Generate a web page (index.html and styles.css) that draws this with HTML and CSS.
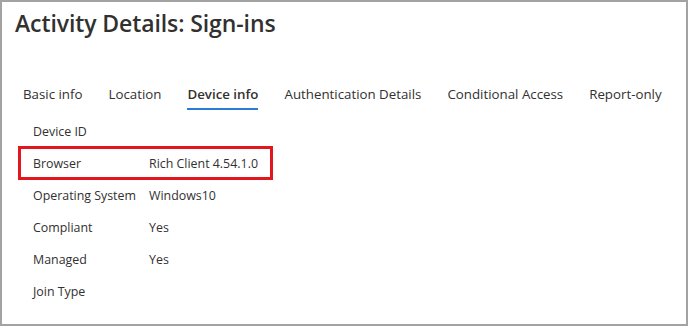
FILE: index.html
```html
<!DOCTYPE html>
<html lang="en">

<head>
    <meta charset="UTF-8">
    <meta name="viewport" content="width=device-width, initial-scale=1.0">
    <title>Activity Details: Sign-ins</title>
    <link rel="stylesheet" href="styles.css">
</head>

<body>

    <div class="panel">
        <h1 class="title">Activity Details: Sign-ins</h1>

        <!-- Abas -->
        <div class="tabs">
            <div class="tab">Basic info</div>
            <div class="tab">Location</div>
            <div class="tab active">Device info</div>
            <div class="tab">Authentication Details</div>
            <div class="tab">Conditional Access</div>
            <div class="tab">Report-only</div>
        </div>

        <!-- Detalhes do dispositivo -->
        <div class="details">
            <div class="row">
                <span class="label">Device ID</span>
                <span class="value"></span>
            </div>
            <div class="row highlight">
                <span class="label">Browser</span>
                <span class="value">Rich Client 4.54.1.0</span>
            </div>
            <div class="row">
                <span class="label">Operating System</span>
                <span class="value">Windows10</span>
            </div>
            <div class="row">
                <span class="label">Compliant</span>
                <span class="value">Yes</span>
            </div>
            <div class="row">
                <span class="label">Managed</span>
                <span class="value">Yes</span>
            </div>
            <div class="row">
                <span class="label">Join Type</span>
                <span class="value"></span>
            </div>
        </div>
    </div>

</body>

</html>
```

FILE: styles.css
```css
body {
    font-family: 'Open Sans', 'Noto Sans', sans-serif;
    margin: 0;
    padding: 0;
    background-color: #fff;
    color: #323130;
}

.panel {
    box-sizing: border-box;
    width: 688px;
    height: 326px;
    border: 2px solid #a3a3a3;
    background-color: #fff;
}

.title {
    margin: 5px 0 0 13px;
    font-size: 23px;
    font-weight: 600;
    line-height: 32px;
    letter-spacing: -0.1px;
}

.tabs {
    display: flex;
    gap: 26px;
    margin: 45px 0 0 21px;
}

.tab {
    font-size: 13.3px;
    line-height: 20px;
    padding-bottom: 4px;
    border-bottom: 2px solid transparent;
    white-space: nowrap;
}

.tab.active {
    font-weight: 600;
    border-bottom-color: #2b7bd3;
}

.details {
    margin-top: 5px;
}

.row {
    display: flex;
    align-items: center;
    width: 253px;
    height: 32px;
    margin-left: 17px;
    padding-left: 14px;
    box-sizing: border-box;
    font-size: 12.4px;
}

.label {
    width: 116px;
    flex-shrink: 0;
}

/* Linha destacada */
.highlight {
    outline: 3px solid #e3161e;
    outline-offset: -2px;
}
```
